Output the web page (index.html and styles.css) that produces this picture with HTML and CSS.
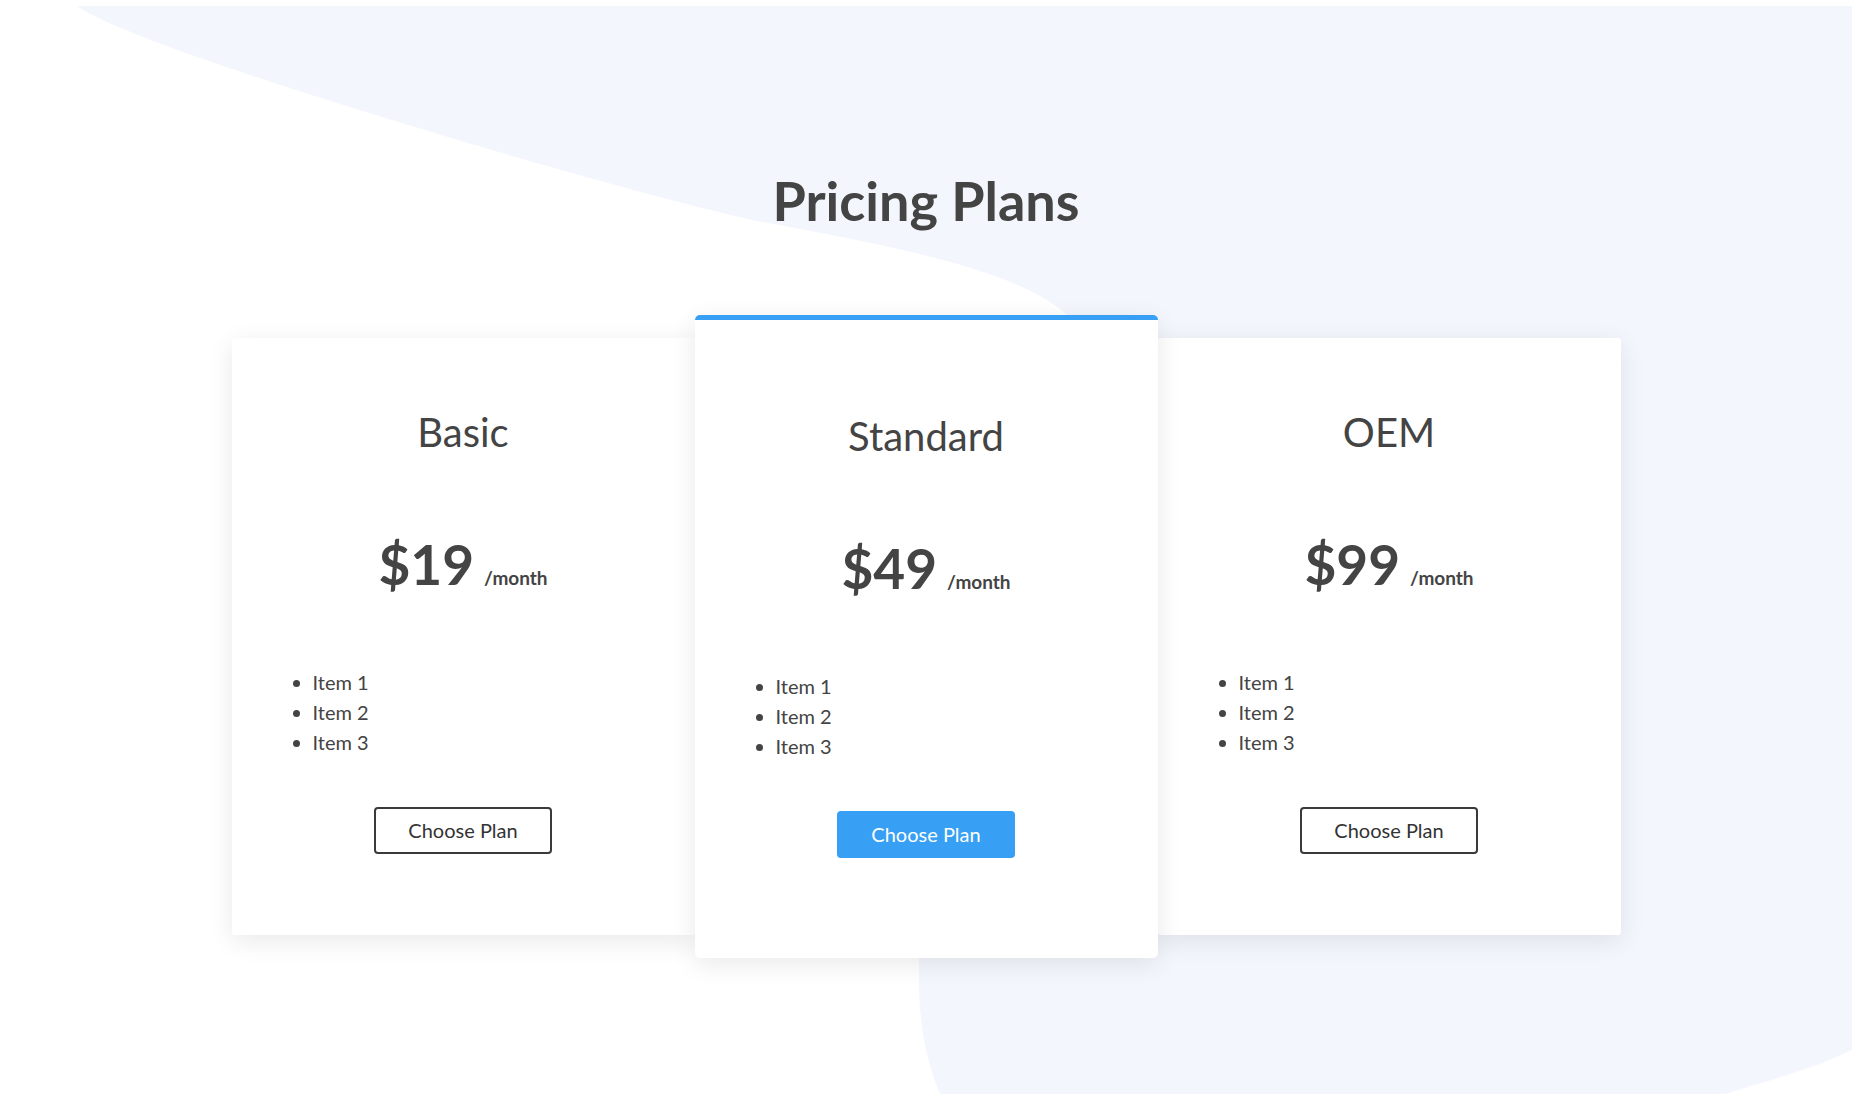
FILE: index.html
```html
<!DOCTYPE html>
<html>
<head>
    <meta charset="UTF-8">
    <title>Pricing Plans</title>
    <link rel="stylesheet" href="styles.css">
</head>
<body>
    <div class="page">
        <svg class="backdrop" viewBox="0 0 1852 1094" preserveAspectRatio="none">
            <path d="M 77 6 C 142 53, 661 203, 768 223 C 874 243, 1020 268, 1069 317 C 1110 354, 919 590, 919 980 C 919 1027, 927 1063, 940 1094 L 1725 1094 C 1770 1080, 1815 1068, 1852 1050 L 1852 6 Z" fill="#f3f6fd"/>
        </svg>

        <div class="pricing">
            <h1>Pricing Plans</h1>

            <div class="plans">
                <div class="plan">
                    <h2>Basic</h2>
                    <div class="price">$19<span class="per">/month</span></div>
                    <ul>
                        <li>Item 1</li>
                        <li>Item 2</li>
                        <li>Item 3</li>
                    </ul>
                    <button class="btn">Choose Plan</button>
                </div>

                <div class="plan featured">
                    <h2>Standard</h2>
                    <div class="price">$49<span class="per">/month</span></div>
                    <ul>
                        <li>Item 1</li>
                        <li>Item 2</li>
                        <li>Item 3</li>
                    </ul>
                    <button class="btn btn-primary">Choose Plan</button>
                </div>

                <div class="plan">
                    <h2>OEM</h2>
                    <div class="price">$99<span class="per">/month</span></div>
                    <ul>
                        <li>Item 1</li>
                        <li>Item 2</li>
                        <li>Item 3</li>
                    </ul>
                    <button class="btn">Choose Plan</button>
                </div>
            </div>
        </div>
    </div>
</body>
</html>
```

FILE: styles.css
```css
body {
    margin: 0;
    font-family: Lato, 'Liberation Sans', sans-serif;
    color: #444;
    background-color: #fff;
}
.page {
    position: relative;
    height: 1094px;
    overflow: hidden;
}
.backdrop {
    position: absolute;
    top: 0;
    left: 0;
    width: 100%;
    height: 100%;
    z-index: 0;
}
.pricing {
    position: relative;
    z-index: 1;
    padding-top: 169px;
}
h1 {
    margin: 0;
    text-align: center;
    font-size: 54px;
    font-weight: 700;
    line-height: 1.2;
    color: #444;
}
.plans {
    display: flex;
    justify-content: center;
    align-items: center;
    margin-top: 81px;
}
.plan {
    width: 463px;
    box-sizing: border-box;
    background-color: #fff;
    padding: 70px 41px 81px;
    border-radius: 3px;
    box-shadow: 0 6px 26px rgba(0, 0, 0, 0.09);
    text-align: center;
}
.featured {
    position: relative;
    z-index: 2;
    border-top: 5px solid #379ff4;
    border-radius: 5px;
    padding-top: 92px;
    padding-bottom: 100px;
}
h2 {
    margin: 0;
    font-size: 40px;
    font-weight: 400;
    line-height: 1.2;
    color: #444;
}
.price {
    margin-top: 75px;
    font-size: 55px;
    font-weight: 700;
    line-height: 1.2;
}
.per {
    margin-left: 10px;
    font-size: 19px;
    font-weight: 700;
}
ul {
    margin: 70px 0 0;
    padding-left: 40px;
    text-align: left;
    font-size: 20px;
    line-height: 30px;
}
.btn {
    margin-top: 50px;
    padding: 10px 32px;
    font-family: Lato, 'Liberation Sans', sans-serif;
    font-size: 20px;
    line-height: 23px;
    color: #333;
    background-color: #fff;
    border: 2px solid #3a3a3a;
    border-radius: 4px;
}
.btn-primary {
    color: #fff;
    background-color: #379ff4;
    border-color: #379ff4;
}
```
